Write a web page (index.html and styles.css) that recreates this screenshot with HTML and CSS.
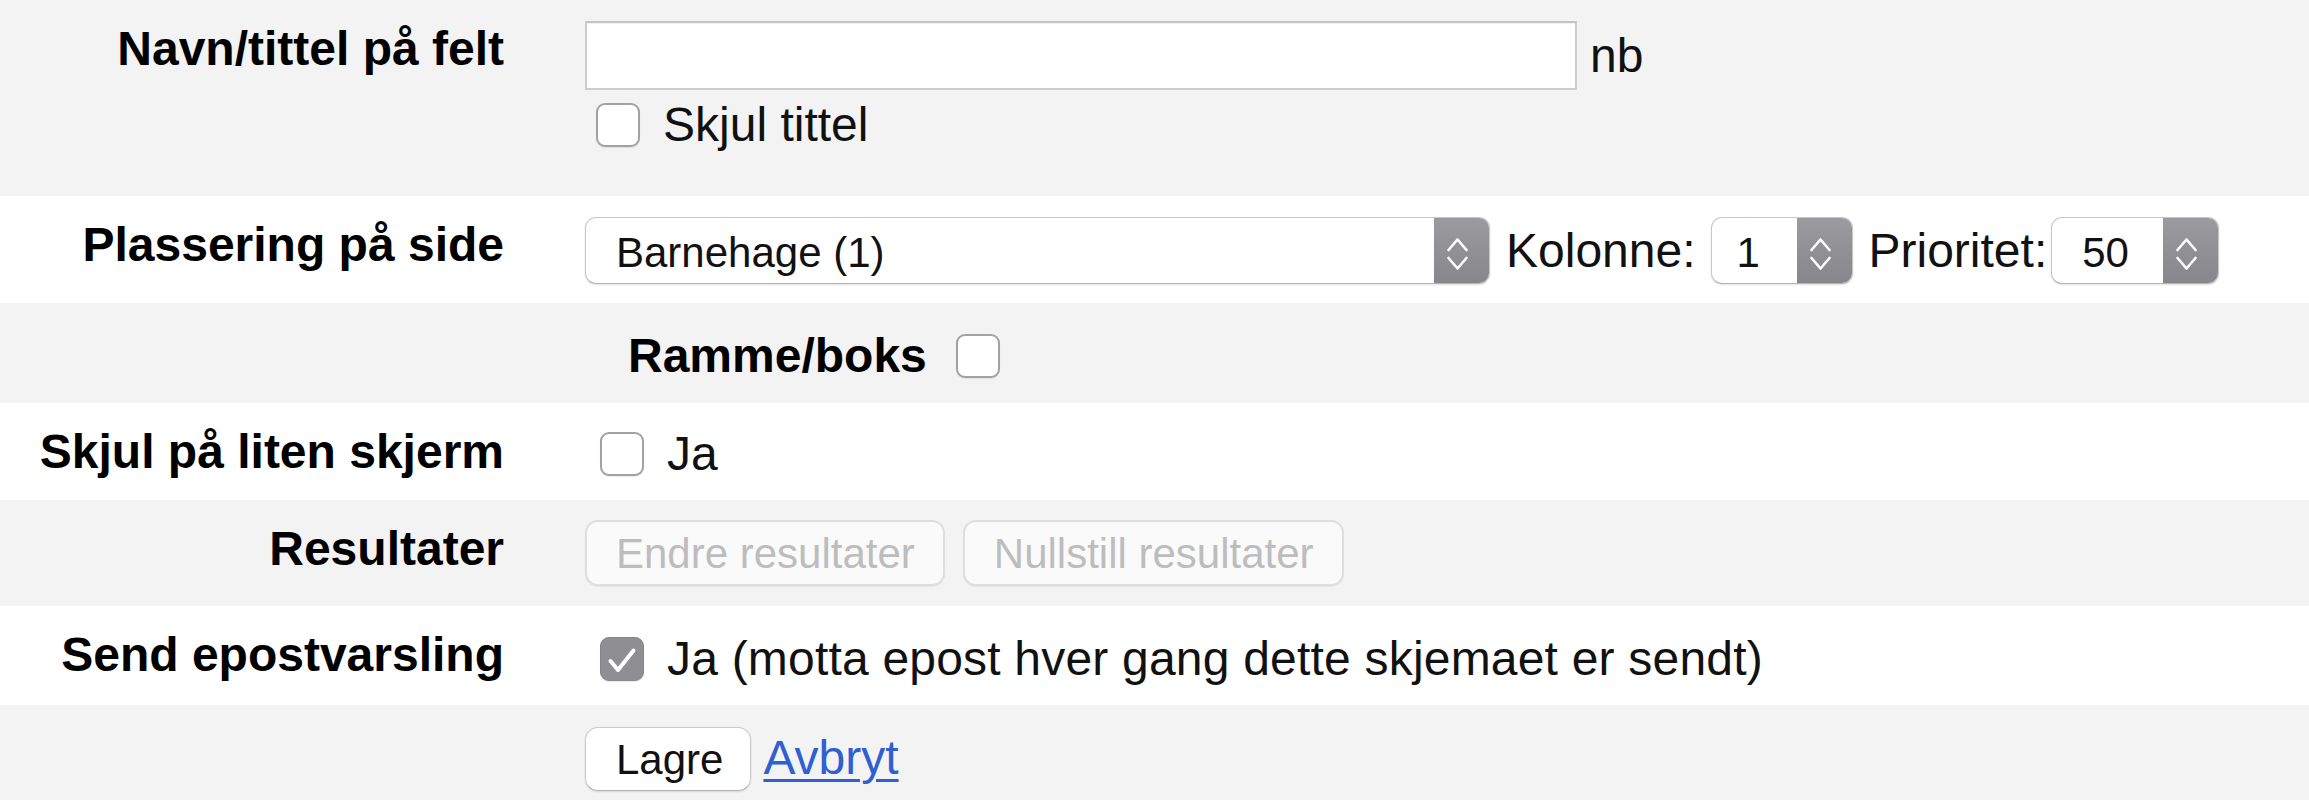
FILE: index.html
```html
<!DOCTYPE html>
<html lang="nb">
<head>
<meta charset="utf-8">
<title>Felt</title>
<link rel="stylesheet" href="styles.css">
</head>
<body>
<div class="form">
  <div class="row alt r1">
    <div class="label">Navn/tittel på felt</div>
    <div class="value">
      <div class="field-line">
        <input class="text-input" type="text">
        <span class="lang">nb</span>
      </div>
      <label class="check-line under">
        <span class="cb"></span>
        <span>Skjul tittel</span>
      </label>
    </div>
  </div>

  <div class="row r2">
    <div class="label">Plassering på side</div>
    <div class="value controls">
      <span class="select wide">
        <span class="sel-text">Barnehage (1)</span>
        <span class="sel-arrow"><svg width="55" height="67" viewBox="0 0 55 67"><path d="M14.5 33 L23.5 22.5 L32.5 33 M14.5 41 L23.5 51.5 L32.5 41" fill="none" stroke="#fff" stroke-width="2.6" stroke-linecap="round" stroke-linejoin="round"/></svg></span>
      </span>
      <span class="inline-label">Kolonne:</span>
      <span class="select small">
        <span class="sel-text">1</span>
        <span class="sel-arrow"><svg width="55" height="67" viewBox="0 0 55 67"><path d="M14.5 33 L23.5 22.5 L32.5 33 M14.5 41 L23.5 51.5 L32.5 41" fill="none" stroke="#fff" stroke-width="2.6" stroke-linecap="round" stroke-linejoin="round"/></svg></span>
      </span>
      <span class="inline-label tight">Prioritet:</span>
      <span class="select mid">
        <span class="sel-text">50</span>
        <span class="sel-arrow"><svg width="55" height="67" viewBox="0 0 55 67"><path d="M14.5 33 L23.5 22.5 L32.5 33 M14.5 41 L23.5 51.5 L32.5 41" fill="none" stroke="#fff" stroke-width="2.6" stroke-linecap="round" stroke-linejoin="round"/></svg></span>
      </span>
    </div>
  </div>

  <div class="row alt r3">
    <label class="frame-line">
      <span class="frame-label">Ramme/boks</span>
      <span class="cb"></span>
    </label>
  </div>

  <div class="row r4">
    <div class="label">Skjul på liten skjerm</div>
    <div class="value">
      <label class="check-line">
        <span class="cb"></span>
        <span>Ja</span>
      </label>
    </div>
  </div>

  <div class="row alt r5">
    <div class="label">Resultater</div>
    <div class="value buttons">
      <button class="btn" type="button" disabled>Endre resultater</button>
      <button class="btn" type="button" disabled>Nullstill resultater</button>
    </div>
  </div>

  <div class="row r6">
    <div class="label">Send epostvarsling</div>
    <div class="value">
      <label class="check-line">
        <span class="cb checked"><svg width="44" height="44" viewBox="0 0 44 44"><path d="M10.5 24 L18 33 L33.5 13.5" fill="none" stroke="#fff" stroke-width="4" stroke-linecap="round" stroke-linejoin="round"/></svg></span>
        <span class="long">Ja (motta epost hver gang dette skjemaet er sendt)</span>
      </label>
    </div>
  </div>

  <div class="row alt r7">
    <div class="label"></div>
    <div class="value actions">
      <button class="btn primary" type="button">Lagre</button>
      <a class="link" href="#">Avbryt</a>
    </div>
  </div>
</div>
</body>
</html>
```

FILE: styles.css
```css
* {
  box-sizing: border-box;
}

html, body {
  margin: 0;
  padding: 0;
  background: #ffffff;
}

body {
  font-family: "Liberation Sans", Arial, Helvetica, sans-serif;
  font-size: 48px;
  line-height: 55px;
  color: #000;
}

.form {
  width: 100%;
}

.row {
  display: flex;
  align-items: flex-start;
}

.row.alt {
  background: #f3f3f3;
}

.r1 { height: 196px; }
.r2 { height: 107px; }
.r3 { height: 100px; }
.r4 { height: 97px; }
.r5 { height: 106px; }
.r6 { height: 99px; }
.r7 { height: 95px; }

.label {
  flex: 0 0 504px;
  text-align: right;
  font-weight: bold;
  font-size: 48px;
  line-height: 55px;
  padding-top: 21px;
  color: #000;
}

.value {
  margin-left: 81px;
  padding-top: 21px;
  color: #111;
}

/* row 1 */
.field-line {
  display: flex;
  align-items: center;
  height: 69px;
}

.text-input {
  width: 992px;
  height: 69px;
  margin: 0;
  border: 2px solid #cdcdcd;
  border-top-color: #c4c4c4;
  background: #fff;
  box-shadow: inset 0 1px 1px rgba(0, 0, 0, 0.06);
  font: inherit;
  padding: 0 10px;
  outline: none;
}

.lang {
  margin-left: 13px;
}

.check-line {
  display: flex;
  align-items: center;
  height: 55px;
  padding-left: 15px;
}

.check-line.under {
  margin-top: 7px;
  padding-left: 11px;
}

.check-line .cb {
  margin-right: 23px;
}

.long {
  letter-spacing: 0.2px;
}

.cb {
  display: inline-block;
  flex: 0 0 44px;
  width: 44px;
  height: 44px;
  border: 2px solid #a2a2a2;
  border-radius: 9px;
  background: #fff;
  box-shadow: 0 1px 1px rgba(0, 0, 0, 0.08);
}

.cb.checked {
  border: 1px solid #85858a;
  background: #8e8e93;
  position: relative;
}

.cb.checked svg {
  position: absolute;
  left: -1px;
  top: -1px;
}

/* row 2 */
.controls {
  display: flex;
  align-items: center;
  padding-top: 21px;
}

.select {
  display: inline-flex;
  align-items: stretch;
  height: 67px;
  border: 1.5px solid #c8c8c8;
  border-bottom-color: #b5b5b5;
  border-radius: 11px;
  background: #fff;
  overflow: hidden;
  box-shadow: 0 1px 2px rgba(0, 0, 0, 0.12);
  font-size: 42px;
  color: #111;
}

.select.wide { width: 905px; }
.select.small { width: 142px; }
.select.mid { width: 168px; }

.sel-text {
  flex: 1;
  display: flex;
  align-items: center;
  padding-left: 30px;
  padding-top: 4px;
  line-height: 1;
}

.select.small .sel-text { padding-left: 25px; }
.select.mid .sel-text { padding-left: 30px; }

.sel-arrow {
  flex: 0 0 55px;
  width: 55px;
  background: linear-gradient(#9a9a9f, #86868b);
  display: flex;
  align-items: center;
  justify-content: center;
}

.sel-arrow svg {
  display: block;
}

.inline-label {
  margin: 0 15px 0 16px;
  color: #111;
}

.inline-label.tight {
  margin-right: 4px;
}

/* row 3 */
.frame-line {
  display: flex;
  align-items: center;
  height: 55px;
  margin-top: 25px;
  padding-left: 628px;
}

.frame-label {
  font-weight: bold;
  margin-right: 29px;
}

/* row 4 / 6 */
.r4 .value { padding-top: 23px; }
.r6 .value { padding-top: 25px; }

/* row 5 */
.buttons {
  display: flex;
  align-items: center;
  padding-top: 20px;
}

.btn {
  display: inline-flex;
  align-items: center;
  height: 66px;
  margin: 0 18px 0 0;
  padding: 2px 28px 0 29px;
  border: 2px solid #dedede;
  border-radius: 13px;
  background: #fafafa;
  font-family: inherit;
  font-size: 42px;
  line-height: 1;
  color: #bdbdbd;
  box-shadow: 0 1px 1px rgba(0, 0, 0, 0.05);
}

.btn.primary {
  height: 64px;
  margin-right: 12px;
  padding: 2px 27px 0 30px;
  border: 1.5px solid #cacaca;
  border-bottom-color: #b4b4b4;
  background: #fff;
  color: #111;
  box-shadow: 0 1px 2px rgba(0, 0, 0, 0.12);
}

/* row 7 */
.actions {
  display: flex;
  align-items: baseline;
  padding-top: 22px;
}

.link {
  color: #2f5fd0;
  text-decoration: underline;
  text-decoration-thickness: 3px;
  text-underline-offset: 5px;
}
```
